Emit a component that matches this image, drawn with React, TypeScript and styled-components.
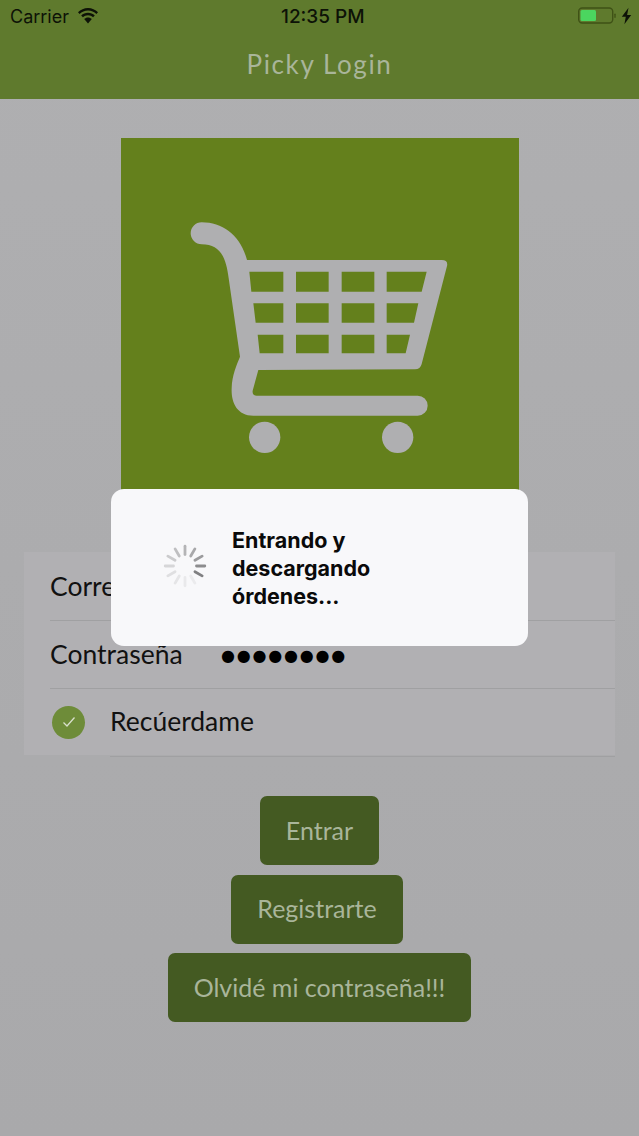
import styled, { createGlobalStyle } from "styled-components";

const GlobalStyle = createGlobalStyle`
  html, body {
    margin: 0;
    padding: 0;
    background: #aaaaac;
  }
  * {
    box-sizing: border-box;
  }
`;

// clockwise from 12 o'clock, darkest at 4 o'clock
const SPOKES = [
  "#b4b4b6",
  "#a8a8aa",
  "#9b9b9d",
  "#8c8c8e",
  "#808082",
  "#ebebed",
  "#e9e9eb",
  "#e5e5e7",
  "#dfdfe1",
  "#d6d6d8",
  "#cbcbcd",
  "#bfbfc1",
];

const Wifi = () => (
  <svg width="22" height="16" viewBox="0 0 22 16">
    <path d="M11 2.600c3.300 0 6.200 1.300 8.400 3.400l1.600-1.800C18.400 1.700 14.900 0 11 0S3.600 1.700 1 4.200L2.600 6C4.800 3.900 7.700 2.600 11 2.600z" fill="#0d1207" />
    <path d="M11 7.300c2 0 3.800.8 5.100 2l1.700-1.800C16 5.800 13.600 4.800 11 4.800S6 5.800 4.200 7.500l1.700 1.800c1.300-1.200 3.100-2 5.100-2z" fill="#0d1207" />
    <path d="M11 9.500c-1.500 0-2.800.6-3.800 1.500L11 15.500l3.800-4.500c-1-.9-2.300-1.500-3.800-1.500z" fill="#0d1207" />
  </svg>
);

const Battery = () => (
  <svg width="55" height="18" viewBox="0 0 55 18">
    <rect x="0.700" y="1" width="34" height="15" rx="3.500" fill="none" stroke="#3f5216" strokeWidth="1.400" />
    <rect x="2.500" y="3" width="15.500" height="11" rx="1.500" fill="#4bd65f" />
    <rect x="36.300" y="6.500" width="1.400" height="4.500" rx="0.700" fill="#3f5216" />
    <path d="M50.500 0.800L43.800 9.800h4l-1.400 7.400 6.800-9.300h-4.100z" fill="#0d1207" />
  </svg>
);

const CartIcon = () => (
  <svg width="398" height="398" viewBox="3 24 1194 1194">
    <path
      fillRule="evenodd"
      fill="#afafb1"
      d="M245 277C310 277 362 318 381 390L965 390Q985 390 981 408L905 702Q901 718 885 718L415 720L398 782Q396 797 410 797L893 797A30 30 0 0 1 893 857L400 857C350 857 333 815 335 775C336 735 350 705 360 680L326 445C318 380 300 343 245 343A33 33 0 0 1 245 277Z
      M388 425L490 425L490 485L394 485Z
      M528 425L626 425L626 485L528 485Z
      M665 425L763 425L763 485L665 485Z
      M800 425L920 425L905 485L800 485Z
      M400 520L490 520L490 578L407 578Z
      M528 520L626 520L626 578L528 578Z
      M665 520L763 520L763 578L665 578Z
      M800 520L895 520L882 578L800 578Z
      M413 614L490 614L490 670L419 670Z
      M528 614L626 614L626 670L528 670Z
      M665 614L763 614L763 670L665 670Z
      M800 614L870 614L857 670L800 670Z"
    />
    <circle cx="434" cy="922" r="47" fill="#afafb1" />
    <circle cx="833" cy="922" r="47" fill="#afafb1" />
  </svg>
);

const Spinner = () => (
  <SpinnerBox width="44" height="44" viewBox="-22 -22 44 44">
    {SPOKES.map((color, i) => (
      <line
        key={i}
        x1="0"
        y1="-11.500"
        x2="0"
        y2="-19.800"
        stroke={color}
        strokeWidth="2.800"
        strokeLinecap="round"
        transform={`rotate(${i * 30})`}
      />
    ))}
  </SpinnerBox>
);

const CheckMark = () => (
  <svg width="14" height="12" viewBox="0 0 14 12">
    <path d="M1.500 6.500L5 10L12.500 1.500" fill="none" stroke="#d8dfcb" strokeWidth="1.300" />
  </svg>
);

const App = () => {
  return (
    <Page>
      <GlobalStyle />
      <Header>
        <StatusBar>
          <Carrier>
            Carrier
            <Wifi />
          </Carrier>
          <Clock>12:35 PM</Clock>
          <Battery />
        </StatusBar>
        <Title>Picky Login</Title>
      </Header>

      <Logo>
        <CartIcon />
      </Logo>

      <LoginForm>
        <Row>
          <RowInner>
            <FieldLabel>Correo</FieldLabel>
          </RowInner>
        </Row>
        <Row>
          <RowInner>
            <FieldLabel>Contraseña</FieldLabel>
            <Dots>●●●●●●●●</Dots>
          </RowInner>
        </Row>
        <CheckRow>
          <CheckCircle>
            <CheckMark />
          </CheckCircle>
          <CheckRowInner>
            <span>Recúerdame</span>
          </CheckRowInner>
        </CheckRow>
      </LoginForm>

      <Buttons>
        <ActionButton $width={119}>Entrar</ActionButton>
        <ActionButton $width={172} $shift={5}>
          Registrarte
        </ActionButton>
        <ActionButton $width={303}>Olvidé mi contraseña!!!</ActionButton>
      </Buttons>

      <Dialog>
        <Spinner />
        <DialogText>
          Entrando y
          <br />
          descargando
          <br />
          órdenes...
        </DialogText>
      </Dialog>
    </Page>
  );
};

export default App;

const Page = styled.div`
  position: relative;
  width: 639px;
  height: 1136px;
  overflow: hidden;
  display: flex;
  flex-direction: column;
  background: linear-gradient(#afafb1, #a9a9ab);
  font-family: Lato, "Noto Sans", sans-serif;
`;

const Header = styled.header`
  height: 99px;
  background: #5f7a2d;
  display: flex;
  flex-direction: column;
`;

const StatusBar = styled.div`
  position: relative;
  height: 32px;
  padding: 0 6px 0 10px;
  display: flex;
  align-items: center;
  justify-content: space-between;
`;

const Carrier = styled.div`
  display: flex;
  align-items: center;
  gap: 8px;
  font-family: Inter, "Liberation Sans", sans-serif;
  font-size: 18px;
  color: #0d1207;
`;

const Clock = styled.div`
  position: absolute;
  left: 281px;
  font-family: Inter, "Liberation Sans", sans-serif;
  font-size: 19px;
  font-weight: 500;
  color: #0d1207;
`;

const Title = styled.h1`
  margin: 0;
  flex: 1;
  display: flex;
  align-items: center;
  justify-content: center;
  padding-bottom: 4px;
  font-size: 26px;
  font-weight: 400;
  letter-spacing: 1.600px;
  color: #a9b59a;
`;

const Logo = styled.div`
  width: 398px;
  height: 398px;
  margin: 39px 0 0 121px;
  background: #64801c;
`;

const LoginForm = styled.form`
  margin: 16px 24px 0;
  padding-top: 1px;
  background: #b1b0b3;
  font-size: 26.500px;
  color: #111;
`;

const Row = styled.div`
  height: 68px;
  padding-left: 26px;
  display: flex;
`;

const CheckRow = styled(Row)`
  height: 66px;
  padding-left: 28px;
  align-items: center;
`;

const RowInner = styled.div`
  flex: 1;
  height: 100%;
  padding-bottom: 2px;
  display: flex;
  align-items: center;
  border-bottom: 1px solid #a0a0a2;
`;

// the last separator runs just past the bottom of the form
const CheckRowInner = styled(RowInner)`
  height: 68px;
  padding-bottom: 4px;
  align-self: flex-start;
`;

const FieldLabel = styled.span`
  width: 172px;
`;

const Dots = styled.span`
  margin: 3px 0 0 -1px;
  font-family: "DejaVu Sans", sans-serif;
  font-size: 16px;
  letter-spacing: 1.800px;
  color: #000;
`;

const CheckCircle = styled.div`
  width: 33px;
  height: 33px;
  margin-right: 25px;
  border-radius: 50%;
  background: #6e8c39;
  display: flex;
  align-items: center;
  justify-content: center;
`;

const Buttons = styled.div`
  margin-top: 41px;
  display: flex;
  flex-direction: column;
  align-items: center;
  gap: 9.500px;
`;

const ActionButton = styled.button<{ $width: number; $shift?: number }>`
  width: ${(p) => p.$width}px;
  height: 69px;
  margin-right: ${(p) => p.$shift ?? 0}px;
  padding: 0 0 2px;
  border: none;
  border-radius: 7px;
  background: #445a22;
  font-family: Lato, "Noto Sans", sans-serif;
  font-size: 25px;
  color: #a9b59a;
`;

const Dialog = styled.div`
  position: absolute;
  left: 111px;
  top: 489px;
  width: 417px;
  height: 157px;
  padding-left: 52px;
  display: flex;
  align-items: center;
  gap: 25px;
  border-radius: 13px;
  background: #f8f8fa;
`;

const SpinnerBox = styled.svg`
  margin-bottom: 4px;
`;

const DialogText = styled.div`
  font-family: Inter, "Liberation Sans", sans-serif;
  font-size: 21.500px;
  font-weight: 700;
  line-height: 28px;
  color: #0a0a0a;
`;
